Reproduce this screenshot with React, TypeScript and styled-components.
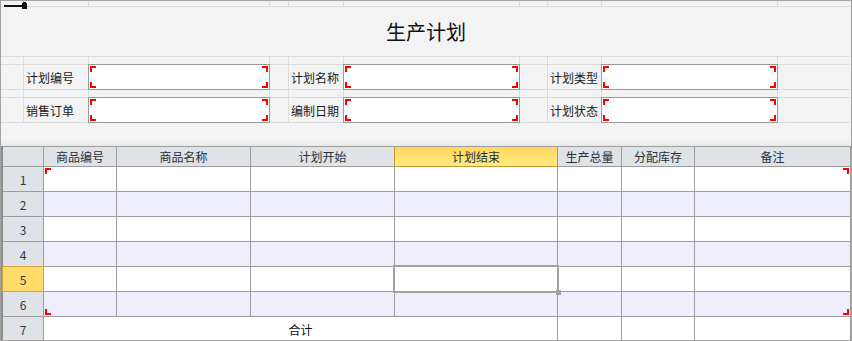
import { Fragment } from "react";
import styled, { createGlobalStyle } from "styled-components";

const GlobalStyle = createGlobalStyle`
  body {
    margin: 0;
    background: #fff;
    font-family: "Noto Sans CJK SC", "Noto Sans", sans-serif;
  }
`;

const Frame = styled.div`
  position: relative;
  width: 852px;
  height: 341px;
  box-sizing: border-box;
  border: 1px solid #a3a3a3;
  background: #f3f3f3;
  display: flex;
  flex-direction: column;
  overflow: hidden;
`;

const Handle = styled.svg`
  position: absolute;
  left: 2px;
  top: 1px;
`;

const FormSheet = styled.div`
  display: grid;
  grid-template-columns: 22px 64px 180px 18px 54px 175px 27px 53px 175px 1fr;
  grid-template-rows: 5px 49px 7px 24px 7px 24px 23px;
  gap: 1px;
  background: #dcdcdc;
  flex-shrink: 0;
`;

const Cell = styled.div`
  background: #f3f3f3;
`;

const Title = styled.div`
  grid-column: 1 / -1;
  background: #f3f3f3;
  display: flex;
  align-items: center;
  justify-content: center;
  font-size: 20px;
  color: #111;
`;

const Label = styled.div`
  background: #f3f3f3;
  display: flex;
  align-items: center;
  padding-left: 2px;
  font-size: 12px;
  color: #1a1a1a;
  white-space: nowrap;
`;

const Input = styled.div`
  position: relative;
  margin: -1px;
  background: #fff;
  border: 1px solid #9a9a9a;
`;

const Shade = styled.div`
  grid-column: 1 / -1;
  background: linear-gradient(#f3f3f3 0%, #f3f3f3 70%, #e9e9e9 100%);
`;

type Pos = "tl" | "tr" | "bl" | "br";

const Corner = styled.span<{ $pos: Pos }>`
  position: absolute;
  width: 6px;
  height: 6px;
  box-sizing: border-box;
  border: 0 solid #f00;
  ${({ $pos }) => ($pos[0] === "t" ? "top: 1px; border-top-width: 2px;" : "bottom: 1px; border-bottom-width: 2px;")}
  ${({ $pos }) => ($pos[1] === "l" ? "left: 1px; border-left-width: 2px;" : "right: 1px; border-right-width: 2px;")}
`;

const Table = styled.div`
  display: grid;
  grid-template-columns: 40px 72px 133px 143px 162px 63px 72px 1fr;
  grid-template-rows: 19px repeat(7, 24px);
  gap: 1px;
  background: #9d9d9d;
  border-top: 1px solid #9d9d9d;
  border-left: 2px solid #8c8c8c;
  border-right: 1px solid #9d9d9d;
  flex-shrink: 0;
  font-size: 12px;
`;

const HeaderCell = styled.div<{ $active?: boolean }>`
  display: flex;
  align-items: center;
  justify-content: center;
  color: #26313c;
  background: ${({ $active }) => ($active ? "linear-gradient(#ffd65a, #ffeb85)" : "#dfe3e8")};
  box-shadow: ${({ $active }) => ($active ? "0 1px 0 #cd9433, -1px 0 0 #cd9433, 1px 0 0 #cd9433" : "none")};
`;

const RowHead = styled.div<{ $active?: boolean }>`
  display: flex;
  align-items: center;
  justify-content: center;
  color: #2b3846;
  background: ${({ $active }) => ($active ? "#ffdb6b" : "#dfe3e8")};
  box-shadow: ${({ $active }) => ($active ? "0 0 0 1px #d6a141" : "none")};
  position: relative;
`;

const DataCell = styled.div<{ $alt?: boolean }>`
  position: relative;
  background: ${({ $alt }) => ($alt ? "#eeeefc" : "#fff")};
`;

const TotalCell = styled.div`
  grid-column: span 4;
  background: #fff;
  display: flex;
  align-items: center;
  justify-content: center;
  color: #111;
`;

const Selection = styled.span`
  position: absolute;
  z-index: 2;
  top: -2px;
  left: -2px;
  right: -2px;
  bottom: -2px;
  border: 2px solid #a2a2a2;
  pointer-events: none;
  &::after {
    content: "";
    position: absolute;
    right: -4px;
    bottom: -4px;
    width: 5px;
    height: 5px;
    background: #a2a2a2;
  }
`;

const columns = ["商品编号", "商品名称", "计划开始", "计划结束", "生产总量", "分配库存", "备注"];

const formRows = [
  ["计划编号", "计划名称", "计划类型"],
  ["销售订单", "编制日期", "计划状态"],
];

function Blank() {
  return (
    <>
      {Array.from({ length: 10 }, (_, i) => (
        <Cell key={i} />
      ))}
    </>
  );
}

function Field() {
  return (
    <Input>
      <Corner $pos="tl" />
      <Corner $pos="tr" />
      <Corner $pos="bl" />
      <Corner $pos="br" />
    </Input>
  );
}

export default function App() {
  return (
    <>
      <GlobalStyle />
      <Frame>
        <Handle width="26" height="8" viewBox="0 0 26 8">
          <rect x="1" y="3" width="18" height="2" fill="#111" />
          <rect x="19" y="1" width="5" height="6" fill="#111" />
          <rect x="20" y="0" width="3" height="1" fill="#111" />
        </Handle>
        <FormSheet>
          <Blank />
          <Title>生产计划</Title>
          <Blank />
          {formRows.map((labels, r) => (
            <Fragment key={r}>
              {r === 1 && <Blank />}
              <Cell />
              <Label>{labels[0]}</Label>
              <Field />
              <Cell />
              <Label>{labels[1]}</Label>
              <Field />
              <Cell />
              <Label>{labels[2]}</Label>
              <Field />
              <Cell />
            </Fragment>
          ))}
          <Shade />
        </FormSheet>
        <Table>
          <HeaderCell />
          {columns.map((c) => (
            <HeaderCell key={c} $active={c === "计划结束"}>
              {c}
            </HeaderCell>
          ))}
          {[1, 2, 3, 4, 5, 6].map((n) => (
            <Fragment key={n}>
              <RowHead $active={n === 5}>{n}</RowHead>
              {columns.map((c, i) => (
                <DataCell key={c} $alt={n % 2 === 0}>
                  {n === 1 && i === 0 && <Corner $pos="tl" />}
                  {n === 1 && i === 6 && <Corner $pos="tr" />}
                  {n === 6 && i === 0 && <Corner $pos="bl" />}
                  {n === 6 && i === 6 && <Corner $pos="br" />}
                  {n === 5 && i === 3 && <Selection />}
                </DataCell>
              ))}
            </Fragment>
          ))}
          <RowHead>7</RowHead>
          <TotalCell>合计</TotalCell>
          <DataCell />
          <DataCell />
          <DataCell />
        </Table>
      </Frame>
    </>
  );
}
